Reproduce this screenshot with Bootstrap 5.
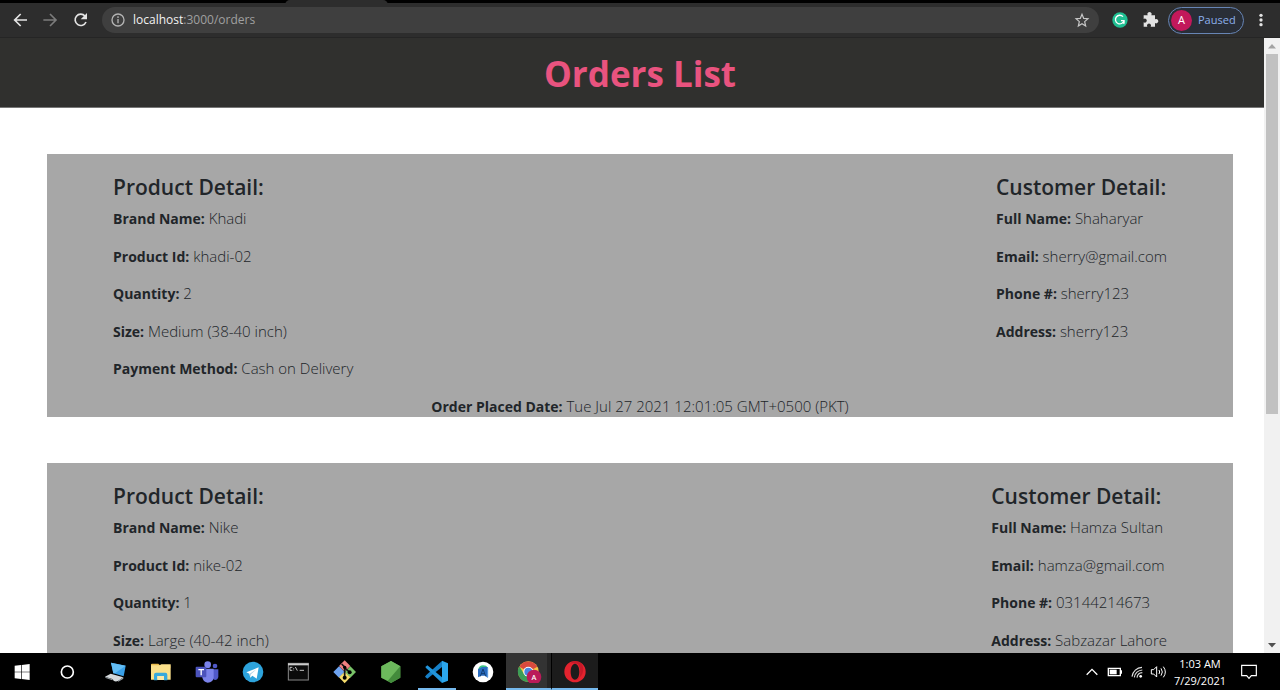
<!DOCTYPE html>
<html lang="en">
<head>
<meta charset="utf-8">
<meta name="viewport" content="width=device-width, initial-scale=1">
<title>Orders List</title>
<link rel="stylesheet" href="https://cdn.jsdelivr.net/npm/bootstrap@5.3.0/dist/css/bootstrap.min.css">
<style>
:root { font-size: 15px; }
body { font-family: "Open Sans", "Noto Sans", sans-serif; font-size: 15px; color: #212529; }
svg { display: block; flex: none; }
button { border: 0; background: none; padding: 0; color: inherit; }

.tab-strip { height: 9px; background: #000; padding-left: 285px; margin-bottom: -6px; }
.tab-active { width: 103px; background: #2d2d2d; border-radius: 5px 5px 0 0; }
.toolbar { height: 35px; background: #2d2d2d; border-bottom: 1px solid #252525; padding: 0 8px; position: relative; gap: 6px; }
.omnibox { height: 26px; background: #3f3f3f; border-radius: 13px; padding: 0 5px 0 4px; margin: 0 3px 0 4px; gap: 3px; }
.url { font-size: 12px; color: #a0a0a0; text-decoration: none; }
.url span { color: #f2f2f2; }
.profile { height: 27px; width: 76px; border: 1px solid #6785b5; border-radius: 14px; background: #292e37; color: #8cb0ec; font-size: 11px; padding-left: 2px; gap: 6px; }
.avatar { width: 21px; height: 21px; border-radius: 50%; background: #c2185b; color: #fff; }

.page-head { background: #30302e; height: 70px; border-bottom: 1px solid #777; }
.page-head h1 { color: #e9537f; font-size: 35px; font-weight: 700; line-height: 72px; }
.order-list { padding: 46px 47px 0; gap: 46px; }
.order { background: #a7a7a7; padding-top: 20px; }
.order-body { padding: 0 66px; }
.order h2 { font-size: 21px; font-weight: 600; line-height: 27px; margin-bottom: 6px; }
.order p { font-weight: 300; }
.order b { font-size: 14px; font-weight: 700; }

.scroll-track { width: 16px; background: #f1f1f1; }
.scroll-thumb { height: 360px; margin: 0 2px; background: #c1c1c1; }

.taskbar { height: 37px; background: #000; color: #fff; }
.app { width: 46px; height: 37px; }
.app-sm { width: 45px; }
.app-open { background: #1c1c1c; border-bottom: 2px solid #76b9ed; }
.app-front { background: #333; box-shadow: inset -4px 0 #242424; border-bottom: 2px solid #76b9ed; border-right: 1px solid #000; }
.app-code { background: linear-gradient(#76b9ed, #76b9ed) bottom / 38px 2px no-repeat; }
.system-apps { margin-right: 2px; }
.tray { padding-right: 19px; }
.clock { font-size: 11px; line-height: 17px; width: 56px; margin: 0 9px 0 3px; }
</style>
</head>
<body class="vh-100 d-flex flex-column overflow-hidden bg-white">

<header class="flex-shrink-0">
  <div class="tab-strip d-flex"><div class="tab-active"></div></div>
  <div class="toolbar d-flex align-items-center">
    <button aria-label="Back"><svg width="24" height="24" viewBox="24 24 72 72" fill="none" stroke="#e4e4e4" stroke-width="5"><path d="M81 60H46M62 42 44 60l18 18"/></svg></button>
    <button aria-label="Forward"><svg width="24" height="24" viewBox="116 24 72 72" fill="none" stroke="#7c7c7c" stroke-width="5"><path d="M132 60h36M152 42l18 18-18 18"/></svg></button>
    <button aria-label="Reload"><svg width="24" height="24" viewBox="204 24 72 72" fill="none" stroke="#e4e4e4" stroke-width="5"><path d="M255 48a17 17 0 1 0 3 18"/><path d="M261 39v19h-19z" fill="#e4e4e4" stroke="none"/></svg></button>
    <div class="omnibox d-flex align-items-center flex-grow-1">
      <svg width="24" height="24" viewBox="318 24 72 72" fill="none" stroke="#b4b4b4" stroke-width="4"><circle cx="354" cy="60" r="18"/><path d="M354 57v13M354 49v5"/></svg>
      <a class="url" href="#"><span>localhost</span>:3000/orders</a>
      <button aria-label="Bookmark" class="ms-auto"><svg width="24" height="24" viewBox="91 24 72 72" fill="none" stroke="#c8c8c8" stroke-width="3.5"><path d="m127 43 5 12 13 1-10 9 3 13-11-7-11 7 3-13-10-9 13-1z"/></svg></button>
    </div>
    <button aria-label="Grammarly"><svg width="24" height="24" viewBox="203 24 72 72"><circle cx="239" cy="60" r="23" fill="#1fbf92"/><path d="M248 50a13 13 0 1 0 3 12h-9" fill="none" stroke="#fff" stroke-width="4"/><path d="m245 68 7 5 2-10z" fill="#fff"/></svg></button>
    <button aria-label="Extensions"><svg width="24" height="24" viewBox="293 24 72 72" fill="#e2e2e2"><path d="M310 46h12a6.500 6.500 0 1 1 11 0h11v12a6.500 6.500 0 1 1 0 11v11H331a6 6 0 1 0-10 0h-11V67a6 6 0 1 0 0-10z"/></svg></button>
    <button class="profile d-flex align-items-center"><span class="avatar d-flex align-items-center justify-content-center">A</span><span>Paused</span></button>
    <button aria-label="Menu"><svg width="22" height="24" viewBox="625 24 66 72" fill="#e2e2e2"><circle cx="658" cy="46" r="5"/><circle cx="658" cy="60" r="5"/><circle cx="658" cy="74" r="5"/></svg></button>
  </div>
</header>

<div class="flex-grow-1 position-relative overflow-hidden">
  <div class="page-head text-center"><h1 class="mb-0">Orders List</h1></div>
  <main class="order-list d-flex flex-column">
    <section class="order">
      <div class="order-body d-flex justify-content-between">
        <div>
          <h2>Product Detail:</h2>
          <p><b>Brand Name:</b> Khadi</p>
          <p><b>Product Id:</b> khadi-02</p>
          <p><b>Quantity:</b> 2</p>
          <p><b>Size:</b> Medium (38-40 inch)</p>
          <p><b>Payment Method:</b> Cash on Delivery</p>
        </div>
        <div>
          <h2>Customer Detail:</h2>
          <p><b>Full Name:</b> Shaharyar</p>
          <p><b>Email:</b> sherry@gmail.com</p>
          <p><b>Phone #:</b> sherry123</p>
          <p><b>Address:</b> sherry123</p>
        </div>
      </div>
      <p class="text-center mb-0"><b>Order Placed Date:</b> Tue Jul 27 2021 12:01:05 GMT+0500 (PKT)</p>
    </section>
    <section class="order">
      <div class="order-body d-flex justify-content-between">
        <div>
          <h2>Product Detail:</h2>
          <p><b>Brand Name:</b> Nike</p>
          <p><b>Product Id:</b> nike-02</p>
          <p><b>Quantity:</b> 1</p>
          <p><b>Size:</b> Large (40-42 inch)</p>
        </div>
        <div>
          <h2>Customer Detail:</h2>
          <p><b>Full Name:</b> Hamza Sultan</p>
          <p><b>Email:</b> hamza@gmail.com</p>
          <p><b>Phone #:</b> 03144214673</p>
          <p><b>Address:</b> Sabzazar Lahore</p>
        </div>
      </div>
    </section>
  </main>
  <div class="scroll-track position-absolute top-0 end-0 h-100 d-flex flex-column">
    <svg width="16" height="16" viewBox="0 0 16 16"><path d="M4 10.500 8 6l4 4.500z" fill="#a3a3a3"/></svg>
    <div class="scroll-thumb"></div>
    <svg class="mt-auto" width="16" height="16" viewBox="0 0 16 16"><path d="M4 6 8 10.500 12 6z" fill="#505050"/></svg>
  </div>
</div>

<footer class="taskbar d-flex flex-shrink-0 align-items-center">
  <div class="system-apps d-flex">
    <button class="app app-sm d-flex align-items-center justify-content-center" aria-label="Start"><svg width="25" height="24" viewBox="31 28 75 72" fill="#fff"><path d="M45 45l19-2v20H45zM66 43l24-3v23H66zM45 65h19v20l-19-2zM66 65h24v23l-24-3z"/></svg></button>
    <button class="app app-sm d-flex align-items-center justify-content-center" aria-label="Search"><svg width="25" height="24" viewBox="166 28 75 72"><circle cx="203" cy="64" r="18" fill="none" stroke="#fff" stroke-width="5"/></svg></button>
  </div>
  <button class="app d-flex align-items-center justify-content-center" aria-label="This PC"><svg width="24" height="24" viewBox="310 28 72 72"><path d="m334 36 44 9-6 32-31-9z" fill="#3aa0e8"/><path d="m334 36 44 9-31 22-6 1z" fill="#62bdf5"/><path d="m316 78 17-9 38 11-16 11c-8 4-16-1-15-5z" fill="#d5d9dc"/><path d="m316 78 24 8-2 3-20-7z" fill="#8f979c"/><path d="m355 91 16-11v4l-15 9z" fill="#9ba3a8"/></svg></button>
  <button class="app d-flex align-items-center justify-content-center" aria-label="File Explorer"><svg width="24" height="24" viewBox="448 28 72 72"><path d="M454 41q0-2 3-2h19l5 5h31v9h-58z" fill="#e9bb4c"/><path d="M454 44h26l5-3h28v46h-59z" fill="#fbe08a"/><path d="M463 89V72q0-6 6-6h28q6 0 6 6v17h-10V76h-20v13z" fill="#38a9dc"/><path d="M473 88V76h20v12z" fill="#fbe9ac"/></svg></button>
  <button class="app d-flex align-items-center justify-content-center" aria-label="Teams"><svg width="24" height="24" viewBox="586 28 72 72"><circle cx="624" cy="42" r="10" fill="#7b83eb"/><circle cx="646" cy="46" r="7" fill="#5059c9"/><path d="M636 56h20v23q-2 9-10 9-8-1-10-9z" fill="#5059c9"/><path d="M608 54h34v26q-2 16-18 16-14-1-16-16z" fill="#7b83eb"/><rect x="588" y="48" width="32" height="32" rx="3" fill="#4b53bc"/><path d="M596 57h17M604.500 57v17" stroke="#fff" stroke-width="4"/></svg></button>
  <button class="app d-flex align-items-center justify-content-center" aria-label="Telegram"><svg width="24" height="24" viewBox="723 28 72 72"><circle cx="759" cy="64" r="31" fill="#2da3dc"/><path d="m739 65 37-15-6 34-13-9-6 6-3-12z" fill="#fff"/><path d="m749 69 20-13-16 15-2 9z" fill="#b5d4e8"/></svg></button>
  <button class="app d-flex align-items-center justify-content-center" aria-label="Command Prompt"><svg width="24" height="24" viewBox="861 28 72 72"><rect x="865" y="38" width="60" height="50" fill="#0b0b0b" stroke="#888" stroke-width="3"/><path d="M864 41h62" stroke="#ccc" stroke-width="6"/><path d="M877 50h-7v9h7M881 52v2M881 57v2M886 49l6 11M899 59h13" fill="none" stroke="#e6e6e6" stroke-width="2.500"/></svg></button>
  <button class="app d-flex align-items-center justify-content-center" aria-label="Git Bash"><svg width="24" height="24" viewBox="39 28 72 72"><path d="m74 29 17 17-17 17-17-17z" fill="#f08080"/><path d="m57 47 17 17-17 17-17-17z" fill="#6ea3f0"/><path d="m91 47 17 17-17 17-17-17z" fill="#79c368"/><path d="m74 63 17 17-17 18-17-18z" fill="#f5dc6c"/><path d="M65 40 74 49v32M75 52l14 13" stroke="#151515" stroke-width="5" fill="none"/><circle cx="74" cy="50" r="5"/><circle cx="74" cy="81" r="6"/><circle cx="89" cy="65" r="6"/></svg></button>
  <button class="app d-flex align-items-center justify-content-center" aria-label="Node.js"><svg width="24" height="24" viewBox="176 28 72 72"><path d="m212 31 28 16v34l-28 16-29-16V47z" fill="#56a048"/><path d="m183 47 29-16 28 16-37 43-20-9z" fill="#6cb85c"/><path d="m240 47-37 43 9 7 28-16z" fill="#438b3c"/></svg></button>
  <button class="app app-code d-flex align-items-center justify-content-center" aria-label="Visual Studio Code"><svg width="24" height="24" viewBox="315 28 72 72"><path d="m366 30 18 8v52l-18 7z" fill="#2ba7ee"/><path d="m366 31-47 42-4 5 7 6 44-35z" fill="#1680c8"/><path d="m366 97-47-44-3-4 6-5 44 36z" fill="#2196dd"/></svg></button>
  <button class="app d-flex align-items-center justify-content-center" aria-label="Android Studio"><svg width="24" height="24" viewBox="451 28 72 72"><circle cx="487" cy="64" r="31" fill="#fff"/><path d="M472 57q4-13 15-13t13 6v12h-28z" fill="#3cc583"/><path d="M472 56l12-7h17v33l-7-7h-12l-10 5z" fill="#2b6ec2"/><path d="m487 55-8 22M487 55l8 22M482 69h11" fill="none" stroke="#123c70" stroke-width="3"/><path d="M501 52v28" stroke="#5b9be0" stroke-width="3"/></svg></button>
  <button class="app app-front d-flex align-items-center justify-content-center" aria-label="Chrome"><svg width="26" height="24" viewBox="588 26 78 72"><circle cx="625" cy="64" r="31" fill="#f4c443"/><path d="M625 64 598 49a31 31 0 0 1 54 0z" fill="#d94a3e"/><path d="M598 48a31 31 0 0 0 27 47l8-14-21-10z" fill="#3c9e57"/><circle cx="625" cy="64" r="15" fill="#fff"/><circle cx="625" cy="64" r="12" fill="#4a86e0"/><circle cx="642" cy="80" r="22" fill="#ba1b59"/><text x="642" y="88" text-anchor="middle" font-size="22" font-weight="600" fill="#fff">A</text></svg></button>
  <button class="app app-open d-flex align-items-center justify-content-center" aria-label="Opera"><svg width="24" height="24" viewBox="727 26 72 72"><path fill-rule="evenodd" d="M763 32a32 32 0 1 0 0 64 32 32 0 1 0 0-64zm0 8c8 0 13 11 13 24s-5 24-13 24-13-11-13-24 5-24 13-24z" fill="#e3232e"/><path d="M763 40c20-8 22 56 0 48a32 32 0 0 0 20-48q-8-8-20-8-10 1-14 8 7-4 14 0z" fill="#b01224" opacity=".55"/></svg></button>

  <div class="tray d-flex align-items-center ms-auto">
    <button aria-label="Show hidden icons"><svg width="22" height="24" viewBox="62 59 66 72" fill="none" stroke="#fff" stroke-width="4"><path d="m79 103 16-16 16 16"/></svg></button>
    <button aria-label="Battery"><svg width="24" height="24" viewBox="128 59 72 72"><path d="M144 84h36v22h-36z" fill="none" stroke="#fff" stroke-width="4"/><path d="M148 88h21v14h-21z" fill="#fff"/><path d="M183 90v10" stroke="#fff" stroke-width="4"/></svg></button>
    <button aria-label="Network"><svg width="21" height="24" viewBox="203 59 63 72" fill="none" stroke="#ddd" stroke-width="3.500"><path d="M218 109a32 32 0 0 1 30-28M225 111a25 25 0 0 1 24-22M233 112a17 17 0 0 1 16-15"/><circle cx="244" cy="108" r="4" fill="#fff" stroke="none"/></svg></button>
    <button aria-label="Volume"><svg width="21" height="24" viewBox="266 59 63 72" fill="none" stroke="#fff" stroke-width="3"><path d="M276 88h7l9-9v31l-9-9h-7zM299 89q4 6 0 12M305 84q8 11 0 22M312 79q12 16 0 32"/></svg></button>
    <button class="clock text-center">1:03 AM<br>7/29/2021</button>
    <button aria-label="Notifications"><svg width="24" height="24" viewBox="531 59 72 72" fill="none" stroke="#fff" stroke-width="3.500"><path d="M545 75h44v31h-15l-7 8-7-8h-15z"/></svg></button>
  </div>
</footer>

<script src="https://cdn.jsdelivr.net/npm/bootstrap@5.3.0/dist/js/bootstrap.bundle.min.js"></script>
</body>
</html>
